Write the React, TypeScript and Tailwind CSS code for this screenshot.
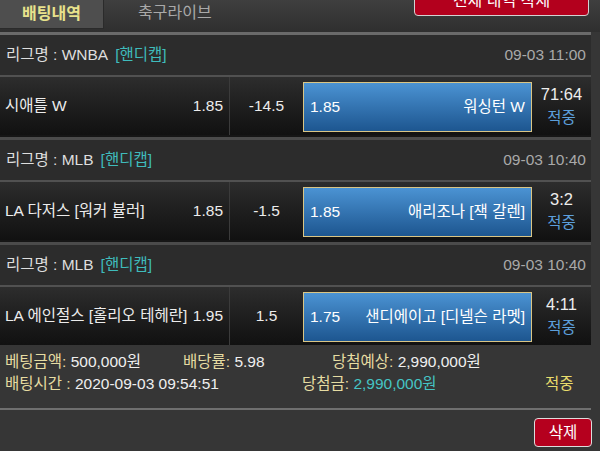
import React from "react";

type Match = {
  league: string;
  date: string;
  home: string;
  homeOdds: string;
  line: string;
  awayOdds: string;
  away: string;
  score: string;
};

const matches: Match[] = [
  { league: "WNBA", date: "09-03 11:00", home: "시애틀 W", homeOdds: "1.85", line: "-14.5", awayOdds: "1.85", away: "워싱턴 W", score: "71:64" },
  { league: "MLB", date: "09-03 10:40", home: "LA 다저스 [워커 뷸러]", homeOdds: "1.85", line: "-1.5", awayOdds: "1.85", away: "애리조나 [잭 갈렌]", score: "3:2" },
  { league: "MLB", date: "09-03 10:40", home: "LA 에인절스 [홀리오 테헤란]", homeOdds: "1.95", line: "1.5", awayOdds: "1.75", away: "샌디에이고 [디넬슨 라멧]", score: "4:11" },
];

function Group({ m, last }: { m: Match; last: boolean }) {
  return (
    <div className="w-[591px]">
      <div className="h-[40px] bg-[#2c2c2c] flex items-center justify-between pl-[6px] pr-[5px] text-[15.5px]">
        <div className="text-[#dedede]">
          리그명 : {m.league}
          <span className="ml-[7px] text-[#3fbcbc]">[핸디캡]</span>
        </div>
        <div className="text-[#a9a9a9]">{m.date}</div>
      </div>
      <div className="h-[2px] bg-[#515151]" />
      <div className="h-[58px] flex bg-gradient-to-b from-[#2d2d2d] to-[#111111] text-[15.5px]">
        <div className="w-[229px] flex items-center justify-between pl-[5px] pr-[6px] text-[#ececec]">
          <span>{m.home}</span>
          <span>{m.homeOdds}</span>
        </div>
        <div className="w-px bg-[#3b3b3b]" />
        <div className="w-[73px] flex items-center justify-center text-[#ececec]">{m.line}</div>
        <div className="w-[229px] mt-[5px] mb-[3px] border-[1.5px] border-[#d9c585] bg-gradient-to-b from-[#4b93d3] to-[#1d5690] flex items-center justify-between pl-[6px] pr-[6px] text-white">
          <span>{m.awayOdds}</span>
          <span>{m.away}</span>
        </div>
        <div className="flex-1 flex flex-col items-center justify-center leading-[23px]">
          <span className="text-[16.5px] text-[#ededed]">{m.score}</span>
          <span className="text-[15.5px] text-[#5c9fdb]">적중</span>
        </div>
      </div>
      {!last && (
        <>
          <div className="h-[2px] bg-[#161616]" />
          <div className="h-[3px] bg-[#4b4b4b]" />
        </>
      )}
    </div>
  );
}

export default function App() {
  return (
    <div className="w-[600px] h-[451px] overflow-hidden bg-[#363636] font-['Liberation_Sans','Noto_Sans_CJK_KR',sans-serif]">
      <div className="h-[32px] flex bg-gradient-to-b from-[#3f3f3f] to-[#2f2f2f]">
        <div className="w-[104px] h-[29px] bg-[#4e4e4e] border-r border-b border-[#2b2b2b] flex items-center justify-center text-[16px] font-bold text-[#e8e28c]">
          배팅내역
        </div>
        <div className="ml-[34px] h-[26px] flex items-center text-[16px] text-[#a9a9a9]">축구라이브</div>
        <div className="ml-auto mr-[11px] -mt-[14px] w-[175px] h-[30px] bg-[#b3001d] border border-[#d2d2d2] rounded-[4px] flex items-center justify-center text-[16px] text-white">
          전체 내역 삭제
        </div>
      </div>
      <div className="w-[591px] h-[3px] bg-[#6a6a6a]" />
      {matches.map((m, i) => (
        <Group key={i} m={m} last={i === matches.length - 1} />
      ))}
      <div className="w-[591px] h-[63px] pt-[6px] pl-[5px] text-[15.5px] leading-[22px]">
        <div className="flex">
          <div className="w-[178px]">
            <span className="text-[#e6dca2]">베팅금액: </span>
            <span className="text-[#efefef]">500,000원</span>
          </div>
          <div className="w-[149px]">
            <span className="text-[#e6dca2]">배당률: </span>
            <span className="text-[#efefef]">5.98</span>
          </div>
          <div>
            <span className="text-[#e6dca2]">당첨예상: </span>
            <span className="text-[#efefef]">2,990,000원</span>
          </div>
        </div>
        <div className="flex">
          <div className="w-[297px]">
            <span className="text-[#e6dca2]">배팅시간 : </span>
            <span className="text-[#efefef]">2020-09-03 09:54:51</span>
          </div>
          <div className="w-[243px]">
            <span className="text-[#e6dca2]">당첨금: </span>
            <span className="text-[#45c4c4]">2,990,000원</span>
          </div>
          <div className="text-[#e8dc6c]">적중</div>
        </div>
      </div>
      <div className="w-[591px] h-[2px] bg-[#6f6f6f]" />
      <div className="flex justify-end pr-[8px] pt-[8px]">
        <div className="w-[58px] h-[29px] bg-[#b5001e] border border-[#dcdcdc] rounded-[4px] flex items-center justify-center text-[15.5px] text-white">
          삭제
        </div>
      </div>
    </div>
  );
}
